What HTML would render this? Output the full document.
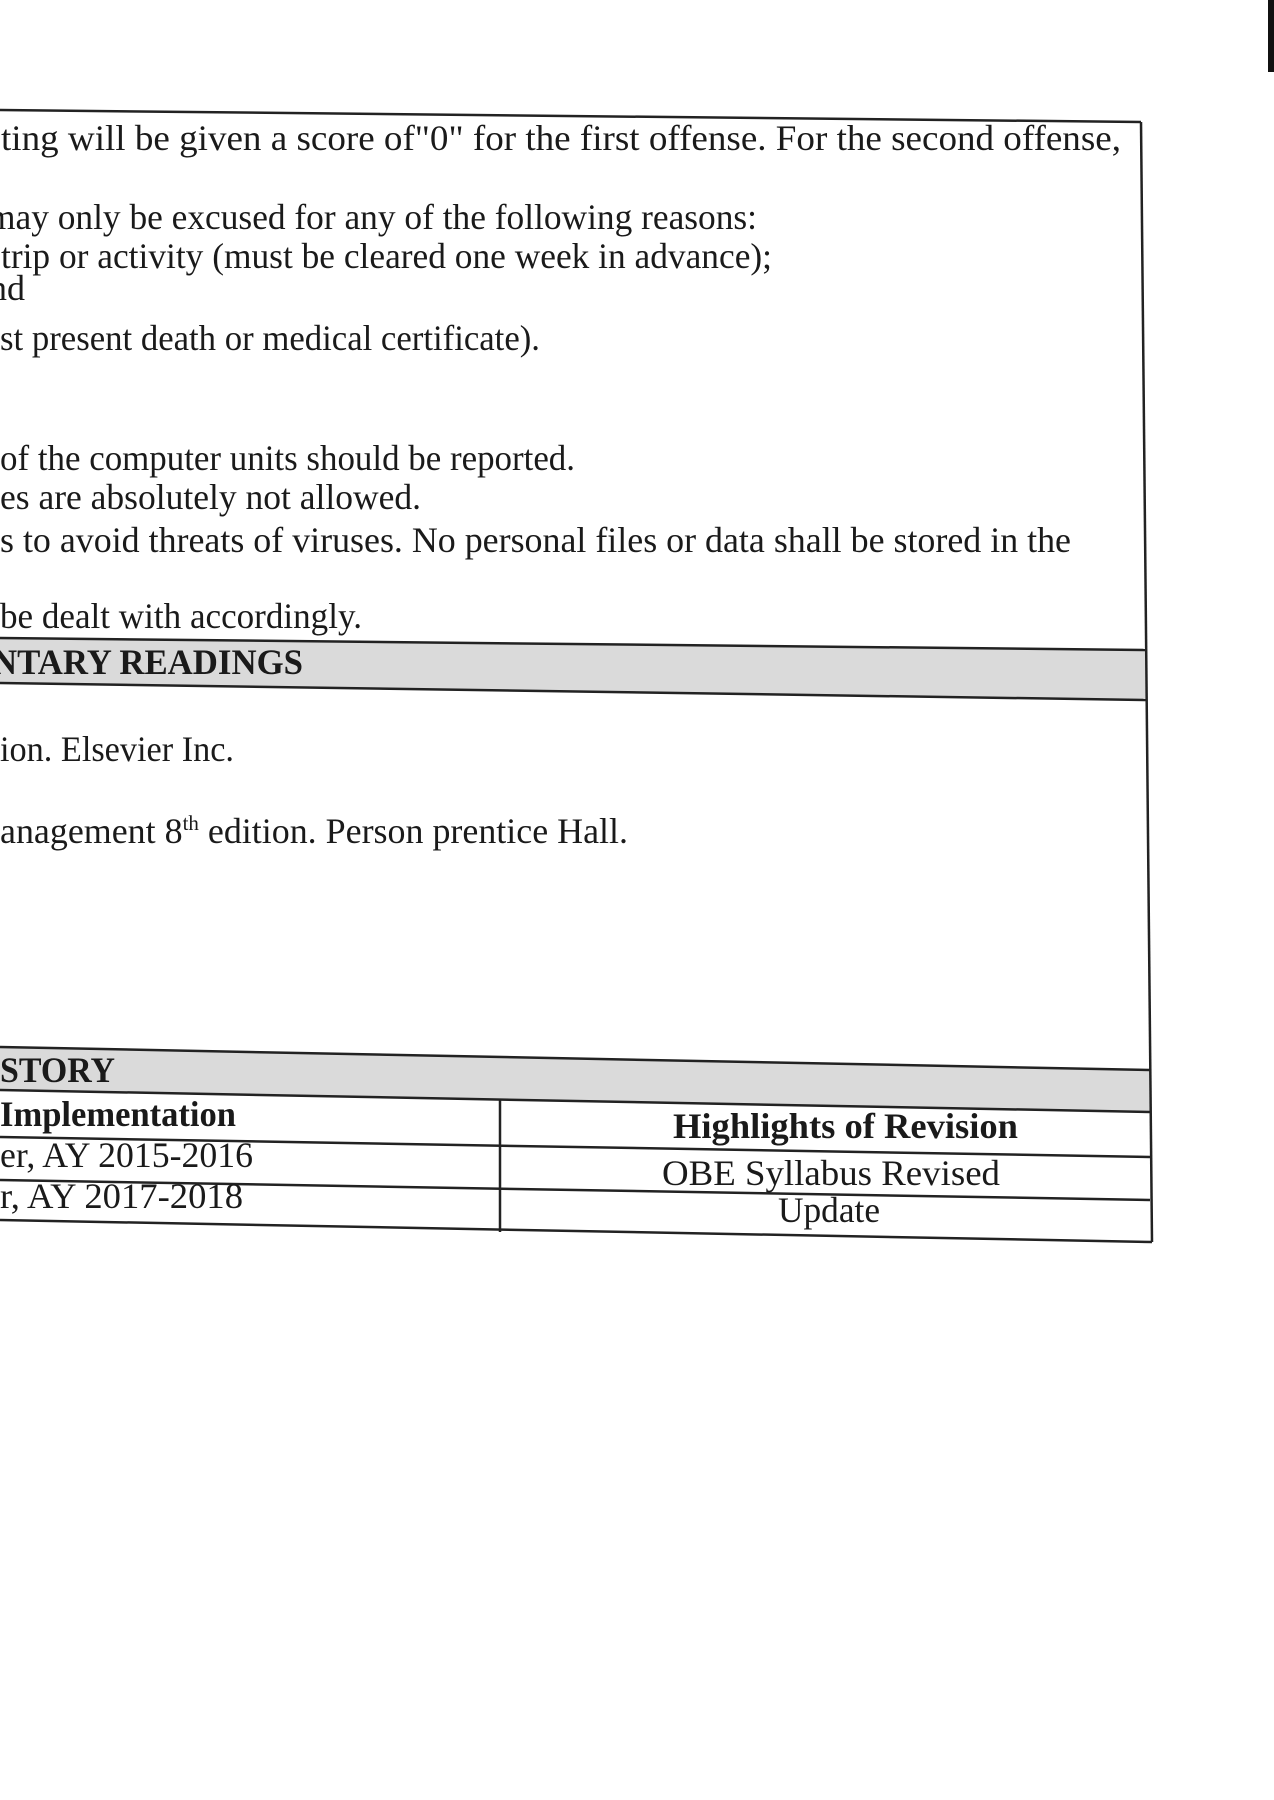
<!DOCTYPE html>
<html><head><meta charset="utf-8"><style>
html,body{margin:0;padding:0;background:#fff;width:1274px;height:1800px;overflow:hidden}
svg{display:block}
text{font-family:"Liberation Serif",serif;font-size:36px;fill:#1a1a1a}
.b{font-weight:bold}
</style></head><body>
<svg width="1274" height="1800" viewBox="0 0 1274 1800" xmlns="http://www.w3.org/2000/svg">
<rect x="1268" y="0" width="6" height="72" fill="#111"/>
<polygon points="0,638 1146,650 1147,700 0,683" fill="#dadada"/>
<polygon points="0,1047 1150,1070 1150,1112 0,1090" fill="#dadada"/>
<g stroke="#222" stroke-width="2.5" fill="none">
<line x1="0" y1="110" x2="1141" y2="122"/>
<line x1="1141" y1="122" x2="1152" y2="1242"/>
<line x1="0" y1="638" x2="1146" y2="650"/>
<line x1="0" y1="683" x2="1147" y2="700"/>
<line x1="0" y1="1047" x2="1150" y2="1070"/>
<line x1="0" y1="1090" x2="1150" y2="1112"/>
<line x1="0" y1="1137" x2="1150" y2="1157"/>
<line x1="0" y1="1180" x2="1150" y2="1200"/>
<line x1="0" y1="1220" x2="1152" y2="1242"/>
<line x1="500" y1="1099" x2="500" y2="1232"/>
</g>
<g lengthAdjust="spacingAndGlyphs">
<text x="1" y="150" textLength="1120" lengthAdjust="spacingAndGlyphs">ting will be given a score of"0" for the first offense. For the second offense,</text>
<text x="-12" y="229" textLength="769" lengthAdjust="spacingAndGlyphs">may only be excused for any of the following reasons:</text>
<text x="1" y="268" textLength="771" lengthAdjust="spacingAndGlyphs">trip or activity (must be cleared one week in advance);</text>
<text x="25" y="300" text-anchor="end">nd</text>
<text x="0" y="350" textLength="540" lengthAdjust="spacingAndGlyphs">st present death or medical certificate).</text>
<text x="0" y="470" textLength="575" lengthAdjust="spacingAndGlyphs">of the computer units should be reported.</text>
<text x="0" y="509" textLength="421" lengthAdjust="spacingAndGlyphs">es are absolutely not allowed.</text>
<text x="0" y="552" textLength="1071" lengthAdjust="spacingAndGlyphs">s to avoid threats of viruses. No personal files or data shall be stored in the</text>
<text x="0" y="628" textLength="362" lengthAdjust="spacingAndGlyphs">be dealt with accordingly.</text>
<text x="-8" y="674" textLength="311" lengthAdjust="spacingAndGlyphs" class="b">NTARY READINGS</text>
<text x="0" y="761" textLength="234" lengthAdjust="spacingAndGlyphs">ion. Elsevier Inc.</text>
<text x="0" y="843" textLength="628" lengthAdjust="spacingAndGlyphs">anagement 8<tspan dy="-13" font-size="21">th</tspan><tspan dy="13"> edition. Person prentice Hall.</tspan></text>
<text x="0" y="1082" textLength="115" lengthAdjust="spacingAndGlyphs" class="b">STORY</text>
<text x="0" y="1126" textLength="236" lengthAdjust="spacingAndGlyphs" class="b">Implementation</text>
<text x="0" y="1167" textLength="253" lengthAdjust="spacingAndGlyphs">er, AY 2015-2016</text>
<text x="0" y="1208" textLength="243" lengthAdjust="spacingAndGlyphs">r, AY 2017-2018</text>
<text x="673" y="1138" textLength="345" lengthAdjust="spacingAndGlyphs" class="b">Highlights of Revision</text>
<text x="662" y="1185" textLength="338" lengthAdjust="spacingAndGlyphs">OBE Syllabus Revised</text>
<text x="778" y="1222" textLength="102" lengthAdjust="spacingAndGlyphs">Update</text>
</g>
</svg>
</body></html>
